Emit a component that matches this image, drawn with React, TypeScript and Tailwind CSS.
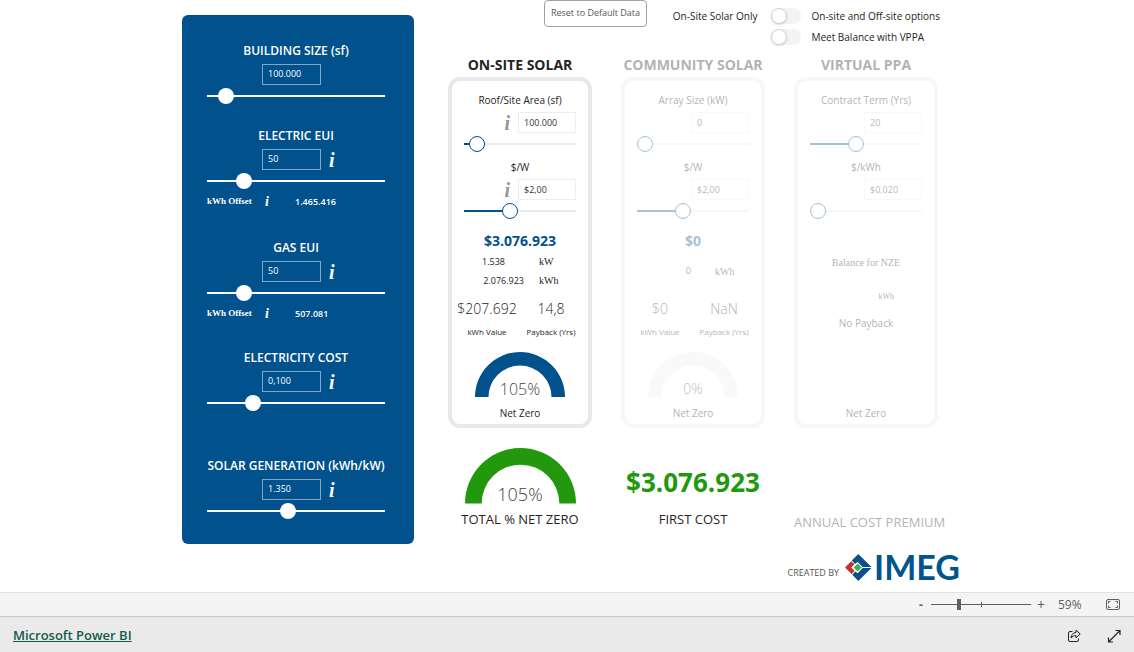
import type { CSSProperties, ReactNode } from 'react';
import clsx from 'clsx';

type RangeProps = {
  label: string;
  value: number;
  min?: number;
  max: number;
  className?: string;
};

// share of the track, in percent, that lies left of the thumb
const fillOf = (value: number, min: number, max: number) =>
  ({ '--fill': `${((value - min) / (max - min)) * 100}%` }) as CSSProperties;

function Range({ label, value, min = 0, max, className }: RangeProps) {
  return (
    <input
      type="range"
      aria-label={label}
      defaultValue={value}
      min={min}
      max={max}
      step="any"
      style={fillOf(value, min, max)}
      className={clsx(
        'mt-[3px] block h-4 w-full appearance-none bg-transparent [&::-webkit-slider-thumb]:-mt-[7px] [&::-webkit-slider-thumb]:size-4 [&::-webkit-slider-thumb]:appearance-none [&::-webkit-slider-thumb]:rounded-full [&::-webkit-slider-thumb]:bg-white',
        className,
      )}
    />
  );
}

function Info({ className }: { className?: string }) {
  return (
    <button
      aria-label="Info"
      className={clsx('font-["Liberation_Serif",serif] font-bold italic leading-none', className)}
    >
      i
    </button>
  );
}

type PanelFieldProps = {
  id: string;
  title: string;
  text: string;
  value: number;
  min?: number;
  max: number;
  info?: boolean;
  offset?: string;
  className?: string;
};

function PanelField({ id, title, text, value, min, max, info = true, offset, className }: PanelFieldProps) {
  return (
    <div className={className}>
      <label htmlFor={id} className="block whitespace-nowrap text-center text-xs leading-[22px] font-semibold">
        {title}
      </label>
      <div className="mt-[2px] flex h-[21px] items-center gap-2 pl-[55px]">
        <input
          id={id}
          defaultValue={text}
          className="h-[21px] w-[59px] border border-[#80a8c6] bg-transparent px-[5px] pb-[2px] text-[9px] font-medium"
        />
        {info && <Info className="text-xl" />}
      </div>
      <Range
        label={title}
        value={value}
        min={min}
        max={max}
        className="[&::-webkit-slider-runnable-track]:h-[2px] [&::-webkit-slider-runnable-track]:bg-white"
      />
      {offset && (
        <div className="mt-1 flex h-[18px] items-center text-[9px]">
          <span className="w-[58px] whitespace-nowrap font-['Liberation_Serif',serif] font-bold">kWh Offset</span>
          <Info className="w-[30px] text-left text-sm" />
          <span className="font-semibold">{offset}</span>
        </div>
      )}
    </div>
  );
}

type CardFieldProps = {
  id: string;
  label: string;
  text: string;
  value: number;
  min?: number;
  max: number;
  info?: boolean;
  className?: string;
};

function CardField({ id, label, text, value, min, max, info, className }: CardFieldProps) {
  return (
    <div className={className}>
      <label htmlFor={id} className="block whitespace-nowrap text-center text-[10px] leading-4">
        {label}
      </label>
      <div className="mt-1 flex h-[21px] items-center justify-end gap-2">
        {info && <Info className="text-xl text-[#979593]" />}
        <input
          id={id}
          defaultValue={text}
          className="h-[21px] w-[58px] border border-[#ededed] bg-transparent px-[5px] text-[9px] text-[#333]"
        />
      </div>
      <Range
        label={label}
        value={value}
        min={min}
        max={max}
        className="[&::-webkit-slider-runnable-track]:h-[2px] [&::-webkit-slider-runnable-track]:bg-[linear-gradient(to_right,#00518c_var(--fill),#eaeaea_var(--fill))] [&::-webkit-slider-thumb]:border [&::-webkit-slider-thumb]:border-[#00518c]"
      />
    </div>
  );
}

function Card({ title, dim, children }: { title: string; dim?: boolean; children: ReactNode }) {
  return (
    <section className={clsx('w-36', dim && 'opacity-35')}>
      <h2 className="flex h-5 items-center justify-center whitespace-nowrap text-sm font-bold text-[#252423]">
        {title}
      </h2>
      <div className="mt-[2px] flex h-[351px] flex-col rounded-xl border-4 border-[#e9e9e9] px-3 pt-[11px] pb-[3px]">
        {children}
      </div>
    </section>
  );
}

function Stats({ cost, payback }: { cost: string; payback: string }) {
  return (
    <div className="-mx-2 mt-[9px] grid grid-cols-[62px_66px] text-center">
      <span className="text-sm leading-5 font-light">{cost}</span>
      <span className="text-sm leading-5 font-light">{payback}</span>
      <span className="mt-[5px] whitespace-nowrap text-[8px] leading-4">kWh Value</span>
      <span className="mt-[5px] whitespace-nowrap text-[8px] leading-4 font-medium">Payback (Yrs)</span>
    </div>
  );
}

function Gauge({ label, className, textClass }: { label: string; className: string; textClass: string }) {
  return (
    <div className={clsx('relative mx-auto shrink-0', className)}>
      <svg viewBox="0 0 90 45" className="block w-full">
        <path d="M0 45a45 45 0 0 1 90 0H76.5a31.5 31.5 0 0 0-63 0z" fill="currentColor" />
      </svg>
      <span className={clsx('absolute inset-x-0 bottom-0 text-center font-light text-[#444]', textClass)}>{label}</span>
    </div>
  );
}

function Switch({ id }: { id: string }) {
  return (
    <input
      id={id}
      type="checkbox"
      role="switch"
      className="h-4 w-[30px] appearance-none rounded-full bg-[#f3f3f3] before:block before:size-4 before:rounded-full before:border before:border-[#d2d2d2] before:bg-white before:shadow-sm checked:before:ml-auto"
    />
  );
}

function Logo() {
  return (
    <div className="flex items-center gap-[2px]">
      <svg viewBox="0 0 27 27" className="size-[27px]">
        <path d="M6.800 6.600 13.300 0 26.500 13H17.600L12.600 8 10 10z" fill="#0a4f8c" />
        <path d="M26.500 14 13.300 27 7.300 20.700 10.200 17.400 12.800 19.200 17.600 14z" fill="#0a4f8c" />
        <path d="M6.200 7.200 9.400 10.300 6.300 13.500 9.600 16.800 6.600 20 0 13.500z" fill="#c4322f" />
        <path d="m12.700 9.500 4 4-4 4-4-4z" fill="#3bb54a" />
      </svg>
      <span className="font-['Lato',sans-serif] text-[34px] leading-7 font-bold text-[#00568b]">IMEG</span>
    </div>
  );
}

export default function App() {
  return (
    <div className="flex min-h-screen flex-col bg-white font-['Open_Sans','Noto_Sans',sans-serif] text-[#252423]">
      <main className="flex flex-1 justify-center gap-[34px] pl-2">
        <aside className="mt-[15px] w-[232px] self-start rounded-md bg-[#00518c] pt-[25px] pr-[29px] pb-[25px] pl-[25px] text-white">
          <PanelField id="size" title="BUILDING SIZE (sf)" text="100.000" value={100000} max={1500000} info={false} />
          <PanelField
            id="electric"
            title="ELECTRIC EUI"
            text="50"
            value={50}
            max={275}
            offset="1.465.416"
            className="mt-[21px]"
          />
          <PanelField id="gas" title="GAS EUI" text="50" value={50} max={275} offset="507.081" className="mt-[26px]" />
          <PanelField id="cost" title="ELECTRICITY COST" text="0,100" value={0.1} max={0.425} className="mt-6" />
          <PanelField
            id="generation"
            title="SOLAR GENERATION (kWh/kW)"
            text="1.350"
            value={1350}
            min={900}
            max={1900}
            className="mt-11"
          />
        </aside>

        <div className="w-[512px]">
          <div className="flex h-[55px] items-start pl-24 text-[10px]">
            <button className="h-[27px] w-[103px] whitespace-nowrap rounded-sm border border-[#a0a0a0] pb-px text-[9px] text-[#555]">
              Reset to Default Data
            </button>
            <div className="ml-auto grid grid-cols-[auto_auto_auto] items-center gap-x-[10px] gap-y-[5px] whitespace-nowrap pt-2 pr-5 leading-4">
              <span className="pr-1">On-Site Solar Only</span>
              <Switch id="offsite" />
              <label htmlFor="offsite">On-site and Off-site options</label>
              <span />
              <Switch id="vppa" />
              <label htmlFor="vppa">Meet Balance with VPPA</label>
            </div>
          </div>

          <div className="flex gap-[29px]">
            <Card title="ON-SITE SOLAR">
              <CardField id="roof" label="Roof/Site Area (sf)" text="100.000" value={100000} max={2000000} info />
              <CardField id="roof-price" label="$/W" text="$2,00" value={2} max={5} info className="mt-[7px]" />
              <p className="mt-3 text-center text-sm leading-5 font-bold text-[#00518c]">$3.076.923</p>
              <div className="mt-px grid grid-cols-[60px_auto] gap-x-[15px] text-[9px] leading-[19px]">
                <span className="pl-[18px]">1.538</span>
                <span className="font-['Liberation_Serif',serif] text-[10px]">kW</span>
                <span className="text-right">2.076.923</span>
                <span className="font-['Liberation_Serif',serif] text-[10px]">kWh</span>
              </div>
              <Stats cost="$207.692" payback="14,8" />
              <Gauge label="105%" className="mt-3 w-[90px] text-[#00518c]" textClass="text-base leading-4" />
              <p className="mt-2 text-center text-[10px] leading-4">Net Zero</p>
            </Card>

            <Card title="COMMUNITY SOLAR" dim>
              <CardField id="array" label="Array Size (kW)" text="0" value={0} max={5000} />
              <CardField id="array-price" label="$/W" text="$2,00" value={2} max={5} className="mt-[7px]" />
              <p className="mt-3 text-center text-sm leading-5 font-bold text-[#00518c]">$0</p>
              <div className="mt-px grid h-[38px] grid-cols-[54px_auto] items-center gap-x-6 text-[9px]">
                <span className="text-right">0</span>
                <span className="font-['Liberation_Serif',serif] text-[10px]">kWh</span>
              </div>
              <Stats cost="$0" payback="NaN" />
              <Gauge label="0%" className="mt-3 w-[90px] text-[#eee]" textClass="text-sm leading-4" />
              <p className="mt-2 text-center text-[10px] leading-4">Net Zero</p>
            </Card>

            <Card title="VIRTUAL PPA" dim>
              <CardField id="term" label="Contract Term (Yrs)" text="20" value={20} max={50} />
              <CardField
                id="term-price"
                label="$/kWh"
                text="$0,020"
                value={0.02}
                min={0.02}
                max={0.2}
                className="mt-[7px]"
              />
              <p className="mt-9 text-center font-['Liberation_Serif',serif] text-[10px] leading-4">Balance for NZE</p>
              <p className="mt-[18px] pr-7 text-right font-['Liberation_Serif',serif] text-[8px] leading-4">kWh</p>
              <p className="mt-[10px] text-center text-[10px] leading-4">No Payback</p>
              <p className="mt-auto text-center text-[10px] leading-4">Net Zero</p>
            </Card>
          </div>

          <div className="mt-5 flex gap-[29px] text-center text-[13px]">
            <div className="w-36">
              <Gauge label="105%" className="w-[111px] text-[#22990d]" textClass="text-lg leading-5" />
              <p className="mt-[7px] whitespace-nowrap leading-4">TOTAL % NET ZERO</p>
            </div>
            <div className="flex w-36 flex-col items-center">
              <strong className="mt-[19px] text-[26px] leading-[30px] text-[#22990d]">$3.076.923</strong>
              <p className="mt-[14px] leading-4">FIRST COST</p>
            </div>
            <p className="mt-[66px] w-[150px] whitespace-nowrap leading-4 text-[#b3b3b3]">ANNUAL COST PREMIUM</p>
          </div>

          <div className="mt-[23px] flex items-end justify-end gap-[6px] text-[9px] text-[#555]">
            <span className="leading-4">CREATED BY</span>
            <Logo />
          </div>
        </div>
      </main>

      <div className="flex h-6 items-center justify-end border-t border-[#e1e1e1] bg-[#f4f4f4] pr-[14px] text-xs text-[#605e5c]">
        <button aria-label="Zoom out" className="w-3 text-left font-bold">
          -
        </button>
        <div className="relative flex w-[100px] items-center">
          <input
            type="range"
            aria-label="Zoom"
            min={10}
            max={190}
            defaultValue={59}
            className="block h-3 w-full appearance-none bg-transparent [&::-webkit-slider-runnable-track]:h-px [&::-webkit-slider-runnable-track]:bg-[#605e5c] [&::-webkit-slider-thumb]:-mt-[5px] [&::-webkit-slider-thumb]:h-[11px] [&::-webkit-slider-thumb]:w-1 [&::-webkit-slider-thumb]:appearance-none [&::-webkit-slider-thumb]:bg-[#605e5c]"
          />
          <span className="pointer-events-none absolute left-1/2 h-[5px] w-px bg-[#605e5c]" />
        </div>
        <button aria-label="Zoom in" className="w-5 text-sm">
          +
        </button>
        <span className="w-[55px] pl-[7px] text-xs">59%</span>
        <button aria-label="Fit to page">
          <svg viewBox="0 0 14 11" className="h-[11px] w-[14px]" fill="none" stroke="currentColor">
            <rect x=".5" y=".5" width="13" height="10" rx="1.500" />
            <path d="M2.500 4.500v-2h2M9.500 2.500h2v2M11.500 6.500v2h-2M4.500 8.500h-2v-2" />
          </svg>
        </button>
      </div>
      <footer className="flex h-9 items-center justify-between border-t border-[#c8c8c8] bg-[#eaeaea] px-[13px] pt-[3px]">
        <a href="https://powerbi.microsoft.com" className="text-[13px] font-semibold text-[#135a4c] underline">
          Microsoft Power BI
        </a>
        <div className="flex items-center gap-[26px] text-[#252423]">
          <button aria-label="Share">
            <svg viewBox="0 0 14 14" className="size-[14px]" fill="none" stroke="currentColor" strokeLinejoin="round">
              <path d="M5.500 2.500H3A1.500 1.500 0 0 0 1.500 4v7A1.500 1.500 0 0 0 3 12.500h7a1.500 1.500 0 0 0 1.500-1.500V9.500" />
              <path d="M9 1.200 13.200 5 9 8.800V6.600C6.800 6.600 5.300 7.300 4 9c.2-3 2-5.400 5-5.600z" />
            </svg>
          </button>
          <button aria-label="Full screen">
            <svg viewBox="0 0 14 14" className="size-[14px]" fill="none" stroke="currentColor" strokeWidth="1.200">
              <path d="M8.500 1.500h4.500v4.500M13 1.500 1.500 13M1.500 8.500V13H6" />
            </svg>
          </button>
        </div>
      </footer>
    </div>
  );
}
